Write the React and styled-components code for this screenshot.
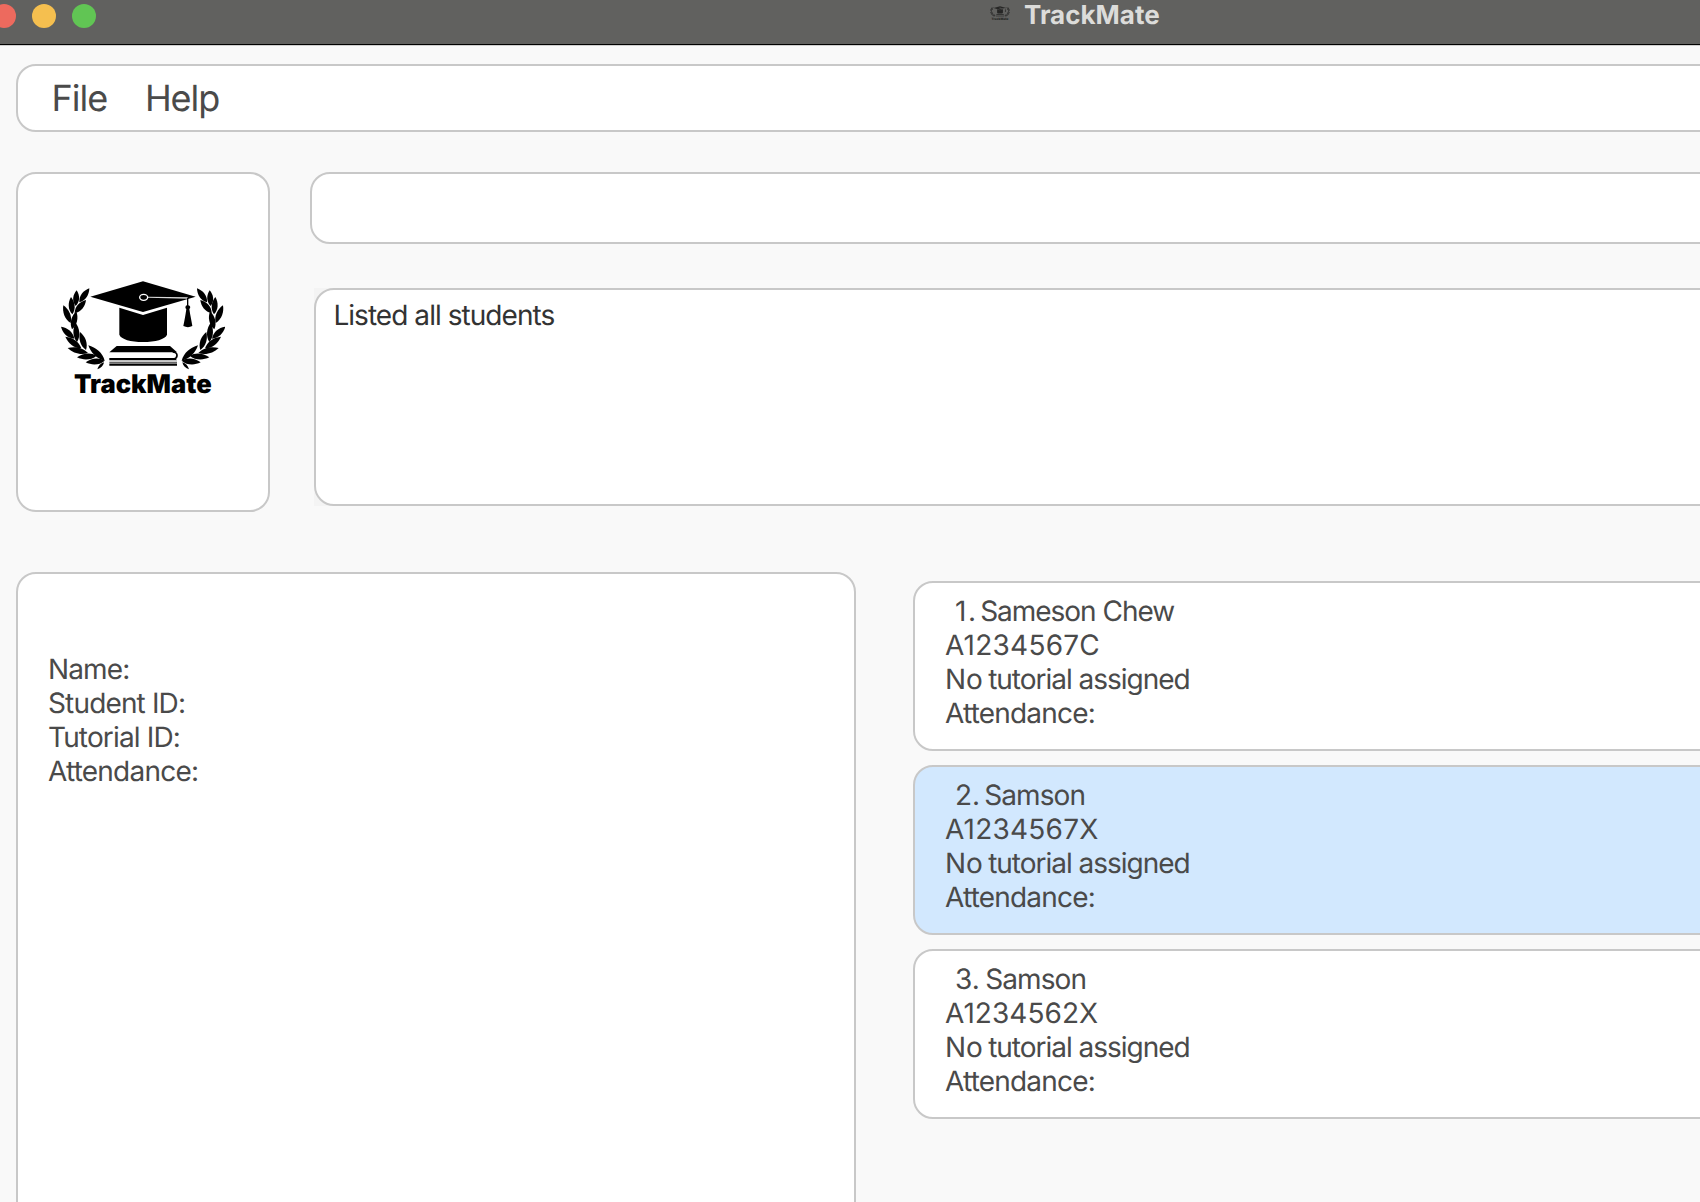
import React from 'react';
import styled, { createGlobalStyle } from 'styled-components';

const GlobalStyle = createGlobalStyle`
  * { box-sizing: border-box; }
  body {
    margin: 0;
    background: #f9f9f9;
    font-family: Inter, "Liberation Sans", sans-serif;
    text-rendering: geometricPrecision;
  }
`;

const Window = styled.div`
  width: 1700px;
  height: 1202px;
  overflow: hidden;
  display: flex;
  flex-direction: column;
  background: #f9f9f9;
`;

const TitleBar = styled.header`
  flex: none;
  height: 46px;
  display: flex;
  align-items: flex-start;
  background: #61615f;
  border-bottom: 1px solid #cfcfcf;
  box-shadow: inset 0 -1px 0 #000;
`;

const Lights = styled.div`
  display: flex;
  gap: 16px;
  margin: 4px 0 0 -8px;
`;

const Light = styled.span`
  width: 24px;
  height: 24px;
  border-radius: 50%;
  background: ${(p) => p.$color};
`;

const Caption = styled.div`
  display: flex;
  margin-left: 894px;
`;

const CaptionIcon = styled.span`
  display: flex;
  width: 20px;
  height: 14px;
  margin: 6px 14px 0 0;
  opacity: 0.6;
`;

const CaptionText = styled.span`
  padding-top: 1px;
  font-size: 26px;
  font-weight: 700;
  line-height: 29px;
  color: #dcdcda;
`;

const Content = styled.main`
  flex: 1;
  width: 1760px;
  display: flex;
  flex-direction: column;
  padding: 18px 0 0 16px;
`;

const Panel = styled.section`
  background: ${(p) => (p.$selected ? '#d2e8fe' : '#fff')};
  border: 2px solid #c8c8c8;
  border-radius: 20px;
`;

const MenuBar = styled(Panel).attrs({ as: 'nav' })`
  flex: none;
  height: 68px;
  display: flex;
  padding-left: 33.6px;
`;

const MenuItem = styled.span`
  width: 93.3px;
  font-size: 36px;
  line-height: 64px;
  letter-spacing: -1.05px;
  color: #4a4a4a;
`;

const TopRow = styled.div`
  flex: none;
  display: flex;
  height: 340px;
  margin-top: 40px;
`;

const LogoPanel = styled(Panel)`
  width: 254px;
  display: flex;
  align-items: flex-start;
  padding: 106px 0 0 43px;
`;

const CommandColumn = styled.div`
  flex: 1;
  display: flex;
  flex-direction: column;
  gap: 44px;
  margin-left: 40px;
`;

const CommandBox = styled(Panel)`
  height: 72px;
`;

const ResultFrame = styled.div`
  height: 218px;
  display: flex;
  margin-left: 4px;
  background: #f4f4f4;
`;

const ResultPanel = styled(Panel)`
  flex: 1;
  padding: 8px 0 0 17.4px;
`;

const Line = styled.div`
  height: 34px;
  font-size: 28px;
  line-height: 34px;
  white-space: nowrap;
  letter-spacing: ${(p) => p.$spacing ?? -0.8}px;
  color: ${(p) => p.$color ?? '#4a4a4a'};
`;

const BottomRow = styled.div`
  flex: 1;
  display: flex;
  margin-top: 60px;
`;

const DetailsPanel = styled(Panel)`
  flex: none;
  width: 840px;
  height: 700px;
  padding: 78px 0 0 30px;
`;

const StudentList = styled.div`
  flex: 1;
  display: flex;
  flex-direction: column;
  gap: 14px;
  margin: 9px 0 0 57px;
`;

const StudentCard = styled(Panel).attrs({ as: 'article' })`
  height: 170px;
  padding: 11px 0 0 30px;
`;

const NameLine = styled(Line)`
  display: flex;
  padding-left: 10px;
`;

const Index = styled.span`
  width: ${(p) => p.$width}px;
  letter-spacing: ${(p) => p.$spacing}px;
`;

const LeadWord = styled.span`
  margin-right: -1.6px;
  letter-spacing: 0;
`;

/* Leaves of the left laurel branch: base x, base y, tip x, tip y. */
const LEAVES = [
  [88, 109, 118, 67],
  [77, 120, 80, 73],
  [74, 141, 108, 102],
  [67, 145, 63, 93],
  [66, 190, 79, 136],
  [62, 171, 40, 118],
  [81, 228, 77, 170],
  [73, 218, 33, 182],
  [108, 252, 90, 198],
  [94, 247, 46, 212],
  [164, 284, 115, 238],
  [114, 261, 53, 246],
  [140, 269, 81, 274],
  [164, 284, 107, 289],
  [162, 289, 142, 310],
];

function leafPath([x1, y1, x2, y2]) {
  const dx = x2 - x1;
  const dy = y2 - y1;
  const len = Math.hypot(dx, dy);
  const w = len < 32 ? 6 : 13.5;
  const nx = (-dy / len) * w;
  const ny = (dx / len) * w;
  const at = (t, s) => `${x1 + dx * t + nx * s} ${y1 + dy * t + ny * s}`;
  return `M${x1} ${y1}C${at(0.3, 0.95)} ${at(0.7, 0.8)} ${x2} ${y2}C${at(0.7, -0.8)} ${at(0.3, -0.95)} ${x1} ${y1}Z`;
}

const BRANCH = LEAVES.map(leafPath);

function Logo({ width, height }) {
  return (
    <svg width={width} height={height} viewBox="33 42 492 360" aria-label="TrackMate">
      {BRANCH.map((d) => <path key={d} d={d} />)}
      <g transform="translate(559 0) scale(-1 1)">
        {BRANCH.map((d) => <path key={d} d={d} />)}
      </g>
      <path d="M121 92 279 46 437 92 279 138Z" />
      <path d="M208 125 279 147 351 125V206C346 220 316 228 279 228S213 220 208 206Z" />
      <ellipse cx="281" cy="94" rx="12" ry="9" fill="none" stroke="#fff" strokeWidth="4" />
      <path d="M293 92 413 94V98L293 95Z" fill="#fff" opacity="0.85" />
      <path d="M411 96h4v22a6 6 0 0 1 3 11C421 150 425 165 427 180Q414 187 400 180C403 165 406 150 409 129a6 6 0 0 1 2-11Z" />
      <path d="M178 259 200 240H360L381 259Z" />
      <path d="M368 258Q381 259 381 268T372 279" fill="none" stroke="#000" strokeWidth="5" />
      <path d="M178 276H375L381 283H178Z" />
      <path d="M178 287H381V290H178Z" opacity="0.8" />
      <path d="M178 292.500H381V299H178Z" />
      <text x="72" y="380" fontFamily="Inter, sans-serif" fontSize="77" fontWeight="900" textLength="413" lengthAdjust="spacingAndGlyphs">
        TrackMate
      </text>
    </svg>
  );
}

const DETAILS = [
  ['Name:', -0.85],
  ['Student ID:', -0.85],
  ['Tutorial ID:', -0.85],
  ['Attendance:', -0.78],
];

const STUDENTS = [
  { no: '1.', noWidth: 25.2, noSpacing: 1.6, name: 'Sameson Chew', nameSpacing: -1.03, id: 'A1234567C', idSpacing: 0.24 },
  { no: '2.', noWidth: 29.2, noSpacing: 0, name: 'Samson', nameSpacing: -0.9, id: 'A1234567X', idSpacing: 0.22, selected: true },
  { no: '3.', noWidth: 30.2, noSpacing: 0, name: 'Samson', nameSpacing: -0.9, id: 'A1234562X', idSpacing: 0.05 },
];

export default function App() {
  return (
    <>
      <GlobalStyle />
      <Window>
        <TitleBar>
          <Lights>
            <Light $color="#ed6a5e" />
            <Light $color="#f5bf4f" />
            <Light $color="#61c554" />
          </Lights>
          <Caption>
            <CaptionIcon>
              <Logo width={20} height={14.63} />
            </CaptionIcon>
            <CaptionText>TrackMate</CaptionText>
          </Caption>
        </TitleBar>
        <Content>
          <MenuBar>
            <MenuItem>File</MenuItem>
            <MenuItem>Help</MenuItem>
          </MenuBar>
          <TopRow>
            <LogoPanel>
              <Logo width={164} height={120} />
            </LogoPanel>
            <CommandColumn>
              <CommandBox />
              <ResultFrame>
                <ResultPanel>
                  <Line $spacing={-0.95} $color="#333">Listed all students</Line>
                </ResultPanel>
              </ResultFrame>
            </CommandColumn>
          </TopRow>
          <BottomRow>
            <DetailsPanel>
              {DETAILS.map(([label, spacing]) => (
                <Line key={label} $spacing={spacing}>{label}</Line>
              ))}
            </DetailsPanel>
            <StudentList>
              {STUDENTS.map((s) => (
                <StudentCard key={s.no} $selected={s.selected}>
                  <NameLine $spacing={s.nameSpacing}>
                    <Index $width={s.noWidth} $spacing={s.noSpacing}>{s.no}</Index>
                    <span>{s.name}</span>
                  </NameLine>
                  <Line $spacing={s.idSpacing}>{s.id}</Line>
                  <Line $spacing={-1.02}>
                    <LeadWord>No</LeadWord> tutorial assigned
                  </Line>
                  <Line>Attendance:</Line>
                </StudentCard>
              ))}
            </StudentList>
          </BottomRow>
        </Content>
      </Window>
    </>
  );
}
